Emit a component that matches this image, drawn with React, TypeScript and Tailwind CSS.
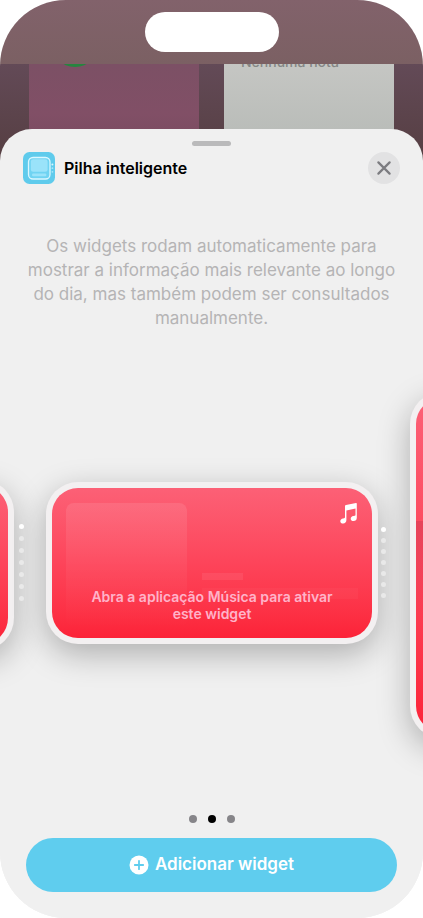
interface WidgetFrameProps {
  className?: string;
  children?: React.ReactNode;
}

const DOTS = [0, 1, 2, 3, 4, 5, 6];

function StackIcon() {
  return (
    <svg viewBox="0 0 32 32" className="size-8 shrink-0" aria-hidden="true">
      <rect width="32" height="32" rx="6.5" fill="#5fcbec" />
      <rect x="5.5" y="5.5" width="21.5" height="21.5" rx="4.5" fill="#6fd3f2" stroke="#d9f7ff" strokeWidth="1.3" />
      <rect x="7.8" y="7.3" width="16.8" height="12.5" rx="2.4" fill="#9ae3fa" />
      <rect x="9" y="21.6" width="14.4" height="2.6" rx="1.2" fill="#9ae3fa" />
      <circle cx="29.4" cy="12.6" r="1" fill="#d9f7ff" />
      <circle cx="29.4" cy="16.2" r="0.9" fill="#a8e6f9" />
      <circle cx="29.4" cy="19.8" r="0.9" fill="#a8e6f9" />
    </svg>
  );
}

function MusicNote() {
  return (
    <svg viewBox="0 0 17 21" className="h-[21px] w-[17px]" fill="#fff" aria-hidden="true">
      <path d="M5 3.2 C5 2.6 5.4 2.2 6 2.1 L16 .1 C16.5 0 16.8 .3 16.8 .8 V14.8 C16.8 16.9 15.4 18.1 13.6 18.1 C11.9 18.1 10.7 17.2 10.7 15.8 C10.7 14.4 11.8 13.4 13.4 13.1 L14.8 12.8 C15.3 12.7 15.5 12.4 15.5 11.9 V5.6 L6.4 7.5 V17 C6.4 19.1 5 20.5 3.2 20.5 C1.5 20.5 .3 19.6 .3 18.2 C.3 16.8 1.4 15.8 3 15.5 L4.2 15.2 C4.8 15.1 5 14.8 5 14.3 Z" />
    </svg>
  );
}

function WidgetFrame({ className = '', children }: WidgetFrameProps) {
  return (
    <div className={`rounded-[32px] bg-[#f3f0f1] p-[6px] shadow-[0_10px_32px_rgba(0,0,0,0.28)] ${className}`}>
      <div className="relative h-full overflow-hidden rounded-[26px] bg-linear-to-b from-[#fc6076] via-[#fd445a] to-[#fc2238]">
        {children}
      </div>
    </div>
  );
}

function StackDots({ className = '' }: { className?: string }) {
  return (
    <div className={`z-10 flex shrink-0 flex-col ${className}`}>
      {DOTS.map((dot) => (
        <span key={dot} className={`size-[5px] rounded-full ${dot === 0 ? 'bg-white' : 'bg-[#e9e9e9]'}`} />
      ))}
    </div>
  );
}

export default function App() {
  return (
    <div className="min-h-screen bg-white font-[Inter,'Liberation_Sans',sans-serif]">
      <div className="flex min-h-screen flex-col overflow-hidden rounded-[66px] bg-[#f0f0f0]">
        {/* Status bar area */}
        <div className="flex h-16 shrink-0 justify-center bg-linear-to-b from-[#82626b] to-[#7b6063] pt-3">
          <div className="h-10 w-[134px] rounded-full bg-white" />
        </div>

        {/* Dimmed home screen */}
        <div className="h-[100px] shrink-0 bg-linear-to-b from-[#634a57] to-[#553e41] px-[29px]">
          <div className="grid h-full grid-cols-2 gap-[25px]">
            <div className="overflow-hidden bg-linear-to-b from-[#7c5065] via-[#814f66] to-[#74495b]">
              <div className="-mt-[45px] ml-[22px] size-12 rounded-full bg-[#26853f]" />
            </div>
            <div className="overflow-hidden bg-linear-to-b from-[#c5c6c3] to-[#b4b8b4]">
              <p className="-mt-[10px] pl-[17px] text-sm leading-4 font-medium text-[#858786]">Nenhuma nota</p>
            </div>
          </div>
        </div>

        {/* Sheet */}
        <main className="z-10 -mt-[35px] flex flex-1 flex-col rounded-t-[32px] bg-[#f0f0f0] pt-3">
          <div className="mx-auto h-[5px] w-[39px] rounded-full bg-[#bababb]" />
          <header className="mt-[6px] flex items-center gap-[9px] px-[23px]">
            <StackIcon />
            <h1 className="flex-1 text-base font-semibold text-black">Pilha inteligente</h1>
            <button type="button" aria-label="Fechar" className="flex size-8 items-center justify-center rounded-full bg-[#e2e2e3]">
              <svg viewBox="0 0 14 14" className="size-[14px]" stroke="#7c7c80" strokeWidth="2.2" strokeLinecap="round" aria-hidden="true">
                <path d="M1.4 1.4 L12.6 12.6 M12.6 1.4 L1.4 12.6" />
              </svg>
            </button>
          </header>

          <p className="mt-[50px] px-5 text-center text-[17px] leading-6 text-[#b5b4b5]">
            Os widgets rodam automaticamente para mostrar a informação mais relevante ao longo do dia, mas também podem ser consultados manualmente.
          </p>

          {/* Widget carousel */}
          <section className="flex flex-1 items-center overflow-hidden pb-4">
            <WidgetFrame className="-ml-[66px] h-[170px] w-20 shrink-0" />
            <StackDots className="mb-1 ml-[5px] gap-[7px]" />
            <WidgetFrame className="mb-1 ml-[22px] h-[162px] min-w-0 flex-1">
              <div className="absolute top-[15px] left-[14px] h-[125px] w-[121px] rounded-lg bg-linear-to-b from-white/10 to-transparent" />
              <div className="absolute top-[85px] left-[150px] h-[7px] w-[41px] bg-white/7" />
              <div className="absolute top-[100px] left-[150px] h-[11px] w-[156px] bg-white/3" />
              <div className="absolute top-[15px] right-[15px]">
                <MusicNote />
              </div>
              <p className="relative flex h-full items-end justify-center px-8 pb-4 text-center text-[14px] leading-[17px] font-semibold text-[#ffb3c9]">
                Abra a aplicação Música para ativar este widget
              </p>
            </WidgetFrame>
            <StackDots className="mb-1 ml-[3px] gap-[6px]" />
            <WidgetFrame className="-mr-[67px] ml-6 h-[346px] w-20 shrink-0">
              <div className="mt-[123px] h-24 bg-linear-to-b from-[#d83d55]/60 to-transparent" />
            </WidgetFrame>
          </section>

          <nav aria-label="Páginas" className="flex justify-center gap-[11px]">
            <button type="button" aria-label="Página 1" className="size-2 rounded-full bg-[#868589]" />
            <button type="button" aria-label="Página 2" aria-current="page" className="size-2 rounded-full bg-black" />
            <button type="button" aria-label="Página 3" className="size-2 rounded-full bg-[#868589]" />
          </nav>

          <div className="px-[26px] pt-[15px] pb-[26px]">
            <button type="button" className="flex h-[54px] w-full items-center justify-center gap-[6px] rounded-full bg-[#5fcdee] text-[17px] font-semibold text-white">
              <svg viewBox="0 0 20 20" className="size-5" aria-hidden="true">
                <circle cx="10" cy="10" r="9.5" fill="#fff" />
                <path d="M10 5.8 V14.2 M5.8 10 H14.2" stroke="#5fcdee" strokeWidth="1.8" strokeLinecap="round" />
              </svg>
              Adicionar widget
            </button>
          </div>
        </main>
      </div>
    </div>
  );
}
